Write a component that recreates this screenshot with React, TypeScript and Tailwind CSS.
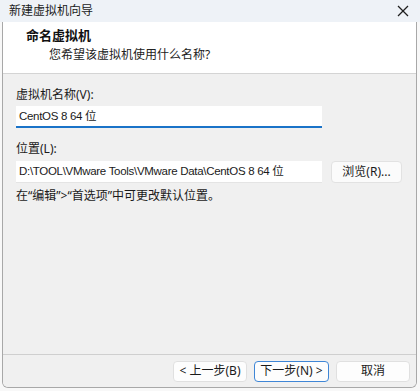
const font = "font-['Noto_Sans','Noto_Sans_CJK_SC',sans-serif]"
const field = "font-['Liberation_Sans','Noto_Sans_CJK_SC',sans-serif] text-[11.5px] tracking-[-0.3px]"

const Btn = ({ label, primary }: { label: string; primary?: boolean }) => (
  <button
    className={
      primary
        ? "h-[21px] w-[75px] rounded-[4px] border border-[#3f86d6] bg-[#fdfdfd] text-[12px] leading-none text-[#1a1a1a]"
        : "h-[21px] w-[74px] rounded-[4px] border border-[#e0e0e0] bg-[#fdfdfd] text-[12px] leading-none text-[#1a1a1a]"
    }
  >
    {label}
  </button>
)

const App = () => {
  return (
    <div className={`flex h-[391px] w-[420px] flex-col bg-[#f8f8f8] ${font}`}>
      <div className="flex h-[22px] shrink-0 items-center bg-[#eef2f7] pl-[9px] text-[12px] text-[#1a1a1a]">
        <span className="flex-1">新建虚拟机向导</span>
        <span className="mr-[9px] flex h-[16px] w-[16px] items-center justify-center">
          <svg width="12" height="12" viewBox="0 0 12 12" className="block">
            <line x1="1" y1="1" x2="11" y2="11" stroke="#1f1f1f" strokeWidth="1.3" />
            <line x1="11" y1="1" x2="1" y2="11" stroke="#1f1f1f" strokeWidth="1.3" />
          </svg>
        </span>
      </div>

      <div className="ml-[2px] mr-[3px] flex h-[366px] flex-col overflow-hidden rounded-b-[6px] border-x border-b border-[#a8a8a8]">
        <div className="flex h-[52px] shrink-0 flex-col border-b border-[#d4d4d4] bg-white pl-[23px] pt-[4px]">
          <p className="text-[13px] font-bold leading-[18px] text-[#111]">命名虚拟机</p>
          <p className="pl-[23px] pt-[3px] text-[12px] leading-[16px] text-[#222]">您希望该虚拟机使用什么名称?</p>
        </div>

        <div className="flex flex-1 flex-col bg-[#f0f0f0] px-[13px] pt-[13px] text-[12px] text-[#1a1a1a]">
          <p className="leading-[16px]">虚拟机名称(V):</p>
          <div className={`mt-[3px] flex h-[22px] w-[306px] items-center border-b-2 border-[#1a73c8] bg-white pl-[3px] pt-[1px] ${field}`}>
            CentOS 8 64 位
          </div>

          <p className="mt-[13px] leading-[16px]">位置(L):</p>
          <div className="mt-[4px] flex items-center gap-[9px]">
            <div className={`flex h-[22px] w-[306px] items-center whitespace-nowrap border-b border-[#e4e4e4] bg-white pl-[3px] ${field}`}>
              D:\TOOL\VMware Tools\VMware Data\CentOS 8 64 位
            </div>
            <button className="h-[22px] w-[71px] rounded-[4px] border border-[#e2e2e2] bg-[#fbfbfb] text-[12px]">
              浏览(R)...
            </button>
          </div>
          <p className="mt-[5px] leading-[16px]">在“编辑”&gt;“首选项”中可更改默认位置。</p>
        </div>

        <div className="flex h-[33px] shrink-0 items-center justify-end gap-[7px] border-t border-[#cfcfcf] bg-[#f0f0f0] pr-[6px]">
          <Btn label="< 上一步(B)" />
          <Btn label="下一步(N) >" primary />
          <Btn label="取消" />
        </div>
      </div>
    </div>
  )
}

export default App
